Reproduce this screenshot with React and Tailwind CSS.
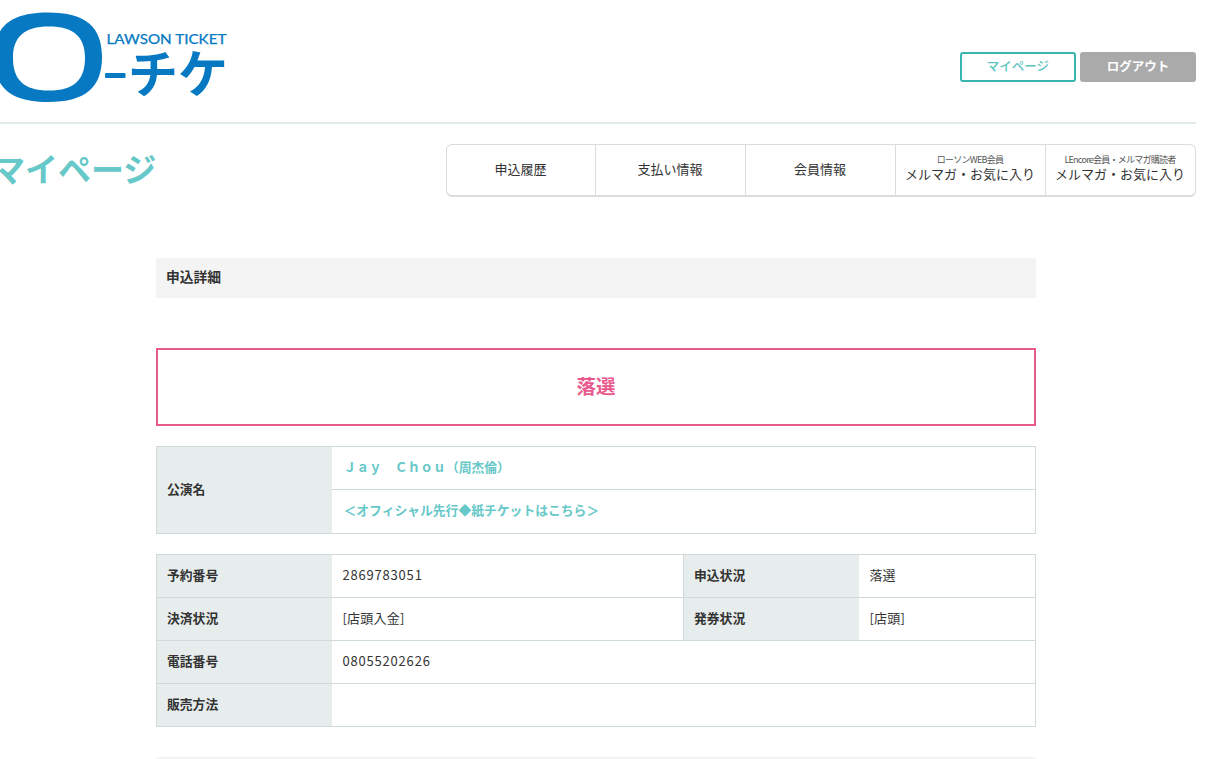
const jp = { fontFamily: '"Noto Sans CJK JP", sans-serif' };

function Logo() {
  return (
    <svg width="230" height="110" viewBox="0 0 230 110" className="block">
      <path fillRule="evenodd" fill="#0679c2" d="M48 12.5C86 12.5 102 27 102 57C102 87 86 102 48 102C10 102 -6 87 -6 57C-6 27 10 12.5 48 12.5ZM49 26.5C24 26.5 13 37 13 58C13 80 24 90.5 49 90.5C74 90.5 85 80 85 58C85 37 74 26.5 49 26.5Z" />
      <text x="106.5" y="44" fontSize="13.4" fontWeight="400" fill="#0679c2" stroke="#0679c2" strokeWidth="0.25" textLength="120" lengthAdjust="spacingAndGlyphs" style={{ fontFamily: 'Lato, sans-serif' }}>LAWSON TICKET</text>
      <rect x="105" y="73" width="20.5" height="5" rx="1" fill="#0679c2" />
      <text x="128" y="93" fontSize="51" fontWeight="700" fill="#0679c2" textLength="100" lengthAdjust="spacingAndGlyphs" style={jp}>チケ</text>
    </svg>
  );
}

function Tab({ small, label, first }) {
  return (
    <a className={`flex flex-col items-center justify-center pr-px pb-[3px] text-[#333] ${first ? 'w-[148px]' : 'w-[150px] border-l border-[#dcdcdc]'}`}>
      {small && <span className="text-[9px] leading-[10px] tracking-[-0.75px] text-[#555] whitespace-nowrap">{small}</span>}
      <span className={small ? 'mt-[1px] text-[13px] leading-[16px] whitespace-nowrap' : 'text-[13px] leading-[18px]'}>{label}</span>
    </a>
  );
}

const th = 'bg-[#e7eded] border border-r-0 border-[#cfdbdb] pl-[10px] pr-[10px] pb-[2px] text-left text-[12.8px] font-bold text-[#333]';
const td = 'border border-l-0 border-[#cfdbdb] pl-[11px] pr-[10px] pb-[2px] text-[13px] text-[#333]';
const link = 'border border-l-0 border-[#cfdbdb] pl-[12px] pr-[10px] pb-[3px] text-[12.8px] font-bold text-[#66c8c8]';

export default function App() {
  return (
    <div className="w-[1196px] bg-white overflow-hidden pb-[2px]" style={jp}>
      <header className="flex h-[124px] items-start justify-between border-b-2 border-[#e0ecec]">
        <Logo />
        <div className="mt-[52px] flex gap-1">
          <a className="flex h-[30px] w-[116px] items-center justify-center rounded-[3px] border-2 border-[#37b7b0] pb-px text-[12.5px] font-medium text-[#5cc4c0]">マイページ</a>
          <a className="flex h-[30px] w-[116px] items-center justify-center rounded-[3px] bg-[#aaaaaa] pb-px text-[12.5px] font-bold text-white">ログアウト</a>
        </div>
      </header>

      <div className="mt-5 flex items-start justify-between">
        <h1 className="-ml-[8px] text-[33px] leading-[48px] font-bold text-[#66c8c8]">マイページ</h1>
        <nav className="flex h-[53px] w-[750px] rounded-[6px] border border-b-2 border-[#dcdcdc]">
          <Tab first label="申込履歴" />
          <Tab label="支払い情報" />
          <Tab label="会員情報" />
          <Tab small="ローソンWEB会員" label="メルマガ・お気に入り" />
          <Tab small="LEncore会員・メルマガ購読者" label="メルマガ・お気に入り" />
        </nav>
      </div>

      <main className="ml-[156px] mt-[61px] w-[880px]">
        <h2 className="flex h-10 items-center rounded-[2px] bg-[#f4f4f4] px-[10px] pb-[4px] text-[13.75px] font-bold text-[#333]">申込詳細</h2>

        <div className="mt-[50px] flex h-[78px] items-center justify-center border-2 border-[#e85a8e] pb-[3px] text-[19.5px] font-bold text-[#e85a8e]">落選</div>

        <table className="mt-5 w-full table-fixed border-collapse">
          <colgroup><col className="w-[175px]" /><col /></colgroup>
          <tbody>
            <tr className="h-[43px]">
              <th rowSpan={2} className={th}>公演名</th>
              <td className={link}>Ｊａｙ　Ｃｈｏｕ（周杰倫）</td>
            </tr>
            <tr className="h-[44px]">
              <td className={link}>＜オフィシャル先行◆紙チケットはこちら＞</td>
            </tr>
          </tbody>
        </table>

        <table className="mt-5 w-full table-fixed border-collapse">
          <colgroup><col className="w-[175px]" /><col className="w-[352px]" /><col className="w-[175px]" /><col /></colgroup>
          <tbody>
            <tr className="h-[43px]">
              <th className={th}>予約番号</th>
              <td className={td}><span className="tracking-[0.8px]">2869783051</span></td>
              <th className={th}>申込状況</th>
              <td className={td}>落選</td>
            </tr>
            <tr className="h-[43px]">
              <th className={th}>決済状況</th>
              <td className={td}><span className="tracking-[0.2px]">[店頭入金]</span></td>
              <th className={th}>発券状況</th>
              <td className={td}><span className="tracking-[0.2px]">[店頭]</span></td>
            </tr>
            <tr className="h-[43px]">
              <th className={th}>電話番号</th>
              <td colSpan={3} className={td}><span className="tracking-[0.8px]">08055202626</span></td>
            </tr>
            <tr className="h-[43px]">
              <th className={th}>販売方法</th>
              <td colSpan={3} className={td}></td>
            </tr>
          </tbody>
        </table>

        <div className="mt-[30px] h-[2px] bg-[#f4f4f4]"></div>
      </main>
    </div>
  );
}
